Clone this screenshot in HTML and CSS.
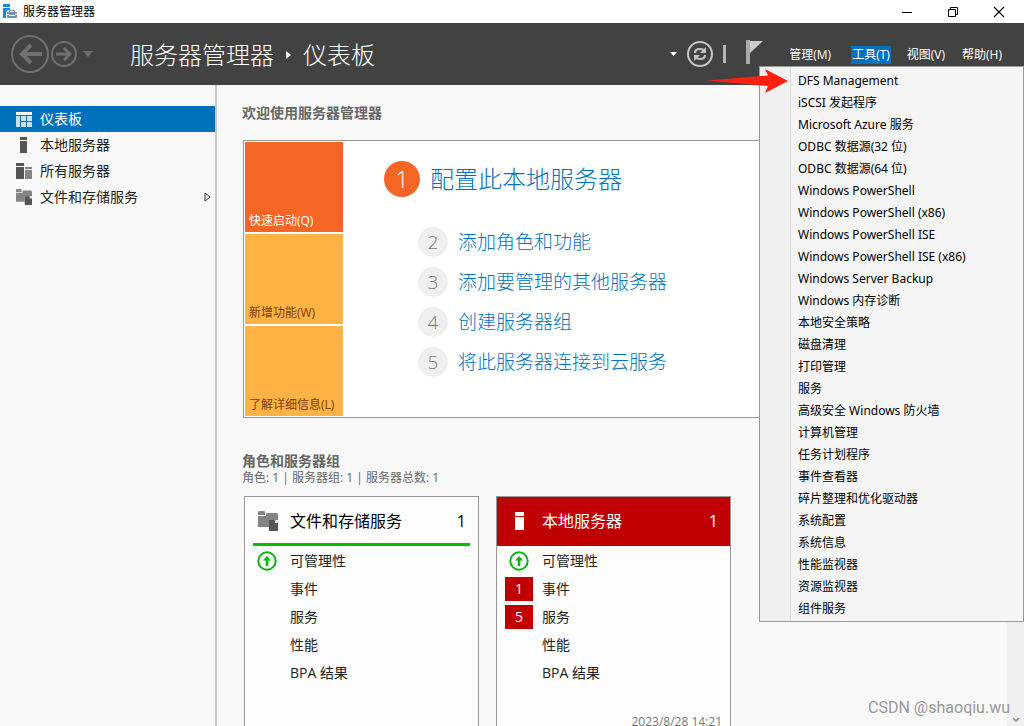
FILE: index.html
```html
<!DOCTYPE html>
<html lang="zh-CN">
<head>
<meta charset="utf-8">
<title>服务器管理器</title>
<link rel="stylesheet" href="styles.css">
</head>
<body>
<svg class="defs" aria-hidden="true">
  <symbol id="files" viewBox="0 0 20 20">
    <path fill="#848484" d="M0 1q0-1 1-1h5q1 0 1 1v3H0zM0 5h8V4q0-2 1-2h10q1 0 1 2v5h-9v7H0z"/>
    <path fill="#555" d="M11 9h6l3 3v8h-9z"/><path fill="#eee" d="M17 9v3h3z"/>
  </symbol>
  <symbol id="ok" viewBox="0 0 20 20">
    <circle cx="10" cy="10" r="8.700" fill="none" stroke="#08b50b" stroke-width="2"/>
    <path fill="#08b50b" d="M10 5l4 4.500H11.300V15H8.700V9.500H6z"/>
  </symbol>
</svg>
<header class="titlebar">
  <svg width="15" height="15" viewBox="0 0 15 15"><path fill="#1c87d8" d="M0 0h7v3H0zM0 4h7v2H5L3 8v6H0z"/><path fill="#6d93ad" d="M6 7q0-1 1-1h4q1 0 1 1v1h2v3H4V8h2zM4 11h10v3H4z"/><path fill="#fff" d="M7 7h4v1H7zM4 10h2v1h6v-1h2v1h-2v1H6v-1H4z"/></svg>
  <span class="app-name">服务器管理器</span>
  <div class="window-buttons">
    <button aria-label="最小化"><svg width="12" height="12"><path d="M1 6.500h10" stroke="#000"/></svg></button>
    <button aria-label="还原"><svg width="12" height="12" fill="none" stroke="#000"><path d="M1.500 3.500h7v7h-7zM3.500 3V1.500h7v7H9"/></svg></button>
    <button aria-label="关闭"><svg width="12" height="12"><path d="M1 1l10 10M11 1L1 11" stroke="#000" stroke-width="1.100"/></svg></button>
  </div>
</header>
<div class="banner">
  <div class="history">
    <button aria-label="后退"><svg width="38" height="38" fill="none" stroke="#707070"><circle cx="19" cy="19" r="18" stroke-width="2"/><path d="M31 19H10M20 10l-9 9 9 9" stroke-width="4"/></svg></button>
    <button aria-label="前进"><svg width="26" height="26" fill="none" stroke="#707070"><circle cx="13" cy="13" r="12" stroke-width="2"/><path d="M5 13h14M13 7l6 6-6 6" stroke-width="3"/></svg></button>
    <button aria-label="历史记录" class="history-more"><svg width="10" height="6"><path fill="#707070" d="M0 0h10L5 6z"/></svg></button>
  </div>
  <h1 class="crumbs"><span>服务器管理器</span><svg width="5" height="8"><path fill="#fff" d="M0 0l5 4-5 4z"/></svg><span>仪表板</span></h1>
  <div class="status">
    <svg width="7" height="4"><path fill="#fff" d="M0 0h7L3.500 4z"/></svg>
    <button aria-label="刷新"><svg width="26" height="26" fill="none" stroke="#c4c4c4"><circle cx="13" cy="13" r="12" stroke-width="2"/><path d="M8 12q0-4 5-4 3 0 5 2M18 14q0 4-5 4-3 0-5-2" stroke-width="2.200"/><path fill="#c4c4c4" stroke="none" d="M19 6v6h-6zM7 20v-6h6z"/></svg></button>
    <span class="divider"></span>
    <button aria-label="通知" class="flag"><svg width="17" height="24"><path fill="#aaa" d="M0 0h4v24H0z"/><path fill="#ccc" d="M4 1h13L4 13z"/></svg></button>
  </div>
  <nav class="menubar">
    <button>管理(M)</button><button class="open" aria-expanded="true">工具(T)</button><button>视图(V)</button><button>帮助(H)</button>
  </nav>
  <ul class="tools-menu" role="menu">
    <li role="menuitem">DFS Management</li>
    <li role="menuitem">iSCSI 发起程序</li>
    <li role="menuitem">Microsoft Azure 服务</li>
    <li role="menuitem">ODBC 数据源(32 位)</li>
    <li role="menuitem">ODBC 数据源(64 位)</li>
    <li role="menuitem">Windows PowerShell</li>
    <li role="menuitem">Windows PowerShell (x86)</li>
    <li role="menuitem">Windows PowerShell ISE</li>
    <li role="menuitem">Windows PowerShell ISE (x86)</li>
    <li role="menuitem">Windows Server Backup</li>
    <li role="menuitem">Windows 内存诊断</li>
    <li role="menuitem">本地安全策略</li>
    <li role="menuitem">磁盘清理</li>
    <li role="menuitem">打印管理</li>
    <li role="menuitem">服务</li>
    <li role="menuitem">高级安全 Windows 防火墙</li>
    <li role="menuitem">计算机管理</li>
    <li role="menuitem">任务计划程序</li>
    <li role="menuitem">事件查看器</li>
    <li role="menuitem">碎片整理和优化驱动器</li>
    <li role="menuitem">系统配置</li>
    <li role="menuitem">系统信息</li>
    <li role="menuitem">性能监视器</li>
    <li role="menuitem">资源监视器</li>
    <li role="menuitem">组件服务</li>
  </ul>
  <svg class="pointer" width="80" height="24" viewBox="0 0 80 24"><path fill="#ff2010" d="M0 11.500L60 6.500 57 0 80 12 57 24 60 17z"/></svg>
</div>
<div class="workspace">
  <nav class="sidebar">
    <a href="#" class="nav-item current"><svg width="16" height="15"><path fill="#fff" d="M0 0h16v3H0z"/><path fill="#c7e0f2" d="M0 4h4v11H0zM5 4h5v5H5zM11 4h5v5h-5zM5 10h5v5H5zM11 10h5v5h-5z"/></svg><span>仪表板</span></a>
    <a href="#" class="nav-item"><svg width="16" height="16"><path fill="#555" d="M4 0h7v3H4zM4 4h7v12H4z"/></svg><span>本地服务器</span></a>
    <a href="#" class="nav-item"><svg width="16" height="16"><path fill="#555" d="M0 0h8v3H0zM0 4h8v12H0z"/><path fill="#848484" d="M9 4h7v2H9zM9 7h7v9H9z"/></svg><span>所有服务器</span></a>
    <a href="#" class="nav-item"><svg width="16" height="16"><use href="#files"/></svg><span>文件和存储服务</span><svg class="expand" width="7" height="10"><path d="M1 1l5 4-5 4z" fill="none" stroke="#333"/></svg></a>
  </nav>
  <main class="content">
    <h2>欢迎使用服务器管理器</h2>
    <section class="welcome">
      <div class="tiles">
        <button class="tile active">快速启动(Q)</button>
        <button class="tile">新增功能(W)</button>
        <button class="tile">了解详细信息(L)</button>
      </div>
      <div class="steps">
        <div class="step first"><span class="num">1</span><a href="#">配置此本地服务器</a></div>
        <div class="step"><span class="num">2</span><a href="#">添加角色和功能</a></div>
        <div class="step"><span class="num">3</span><a href="#">添加要管理的其他服务器</a></div>
        <div class="step"><span class="num">4</span><a href="#">创建服务器组</a></div>
        <div class="step"><span class="num">5</span><a href="#">将此服务器连接到云服务</a></div>
      </div>
    </section>
    <h2>角色和服务器组</h2>
    <p class="summary">角色: 1 | 服务器组: 1 | 服务器总数: 1</p>
    <div class="cards">
      <section class="card">
        <h3 class="card-head"><svg width="20" height="20"><use href="#files"/></svg><span>文件和存储服务</span><span class="count">1</span></h3>
        <ul>
          <li><span class="state"><svg width="20" height="20"><use href="#ok"/></svg></span>可管理性</li>
          <li><span class="state"></span>事件</li>
          <li><span class="state"></span>服务</li>
          <li><span class="state"></span>性能</li>
          <li><span class="state"></span>BPA 结果</li>
        </ul>
      </section>
      <section class="card alert">
        <h3 class="card-head"><svg width="20" height="20"><path fill="#fff" d="M5 1h9v4H5zM5 6h9v13H5z"/></svg><span>本地服务器</span><span class="count">1</span></h3>
        <ul>
          <li><span class="state"><svg width="20" height="20"><use href="#ok"/></svg></span>可管理性</li>
          <li><span class="state bad">1</span>事件</li>
          <li><span class="state bad">5</span>服务</li>
          <li><span class="state"></span>性能</li>
          <li><span class="state"></span>BPA 结果</li>
        </ul>
        <time>2023/8/28 14:21</time>
      </section>
    </div>
  </main>
  <div class="scrollbar"><svg width="8" height="5"><path d="M1 1l3 3 3-3" fill="none" stroke="#888" stroke-width="1.500"/></svg></div>
</div>
<span class="watermark">CSDN @shaoqiu.wu</span>
</body>
</html>
```
FILE: styles.css
```css
* { box-sizing: border-box; }
body {
  margin: 0;
  height: 100vh;
  display: flex;
  flex-direction: column;
  overflow: hidden;
  position: relative;
  background: #f8f8f8;
  color: #222;
  font: 14px/20px "Open Sans", "Noto Sans CJK SC", sans-serif;
}
button { border: 0; padding: 0; background: none; color: inherit; font: inherit; }
a { color: inherit; text-decoration: none; }
ul { list-style: none; margin: 0; padding: 0; }
h1, h2, h3, p { margin: 0; }
svg { flex: none; display: block; }
.defs { position: absolute; width: 0; height: 0; }

.titlebar {
  flex: none;
  height: 23px;
  display: flex;
  align-items: center;
  gap: 5px;
  padding-left: 3px;
  background: #fff;
  color: #000;
  font-size: 12px;
}
.window-buttons { margin-left: auto; display: flex; padding-right: 2px; }
.window-buttons button { width: 46px; height: 20px; display: grid; place-items: center; }

.banner {
  flex: none;
  height: 62px;
  position: relative;
  z-index: 1;
  display: flex;
  align-items: center;
  padding: 0 21px 0 11px;
  background: #424242;
  color: #fff;
}
.history { display: flex; align-items: center; gap: 2px; }
.history-more { padding-left: 4px; }
.crumbs { display: flex; align-items: center; gap: 12px; margin-left: 37px; padding-top: 2px; font-size: 24px; line-height: 32px; font-weight: 300; }
.status { display: flex; align-items: center; gap: 10px; margin-left: auto; }
.divider { width: 3px; height: 18px; background: #b5b5b5; }
.flag { padding: 0 0 4px 10px; }
.menubar { display: flex; gap: 15px; margin-left: 25px; padding-top: 2px; font-size: 12px; line-height: 18px; }
.menubar button { padding: 0 1px; }
.menubar .open { margin-left: 4px; background: #0072bc; }
.tools-menu {
  position: absolute;
  top: 43px;
  right: 0;
  width: 265px;
  padding: 3px 2px 1px;
  border: 1px solid #999;
  background: linear-gradient(90deg, #f0f0f0 30px, #dedede 30px, #dedede 31px, #f5f5f5 31px);
  color: #000;
  font-family: "Noto Sans", "Noto Sans CJK SC", sans-serif;
  font-size: 12px;
  line-height: 22px;
}
.tools-menu li { padding-left: 36px; }
.pointer { position: absolute; top: 46px; right: 236px; }

.workspace { flex: 1; min-height: 0; display: flex; }
.sidebar { flex: none; width: 217px; padding-top: 21px; border-right: 2px solid #c8c8c8; }
.nav-item { height: 26px; display: flex; align-items: center; gap: 8px; padding: 0 4px 0 16px; }
.nav-item.current { background: #0072bc; color: #fff; }
.expand { margin-left: auto; }

.content { flex: 1; min-width: 0; padding: 18px 25px 0; overflow: hidden; }
h2 { font-size: 14px; line-height: 20px; color: #666; }
.welcome {
  display: flex;
  margin: 17px 0 33px 1px;
  padding: 1px;
  border: 1px solid #999;
  background: #fff;
}
.tiles { display: grid; gap: 2px; width: 98px; }
.tile {
  height: 90px;
  display: flex;
  align-items: flex-end;
  padding: 0 4px 2px;
  background: #ffb343;
  color: #803a0c;
  font-size: 12px;
  line-height: 18px;
  white-space: nowrap;
}
.tile.active { background: #f56624; color: #fff; }
.steps { padding: 19px 0 0 41px; color: #0072bc; }
.step { display: flex; align-items: center; gap: 10px; margin: 0 0 10px 34px; font-size: 19px; line-height: 30px; font-weight: 300; }
.step.first { margin: 0 0 30px; font-size: 24px; line-height: 36px; }
.num { width: 30px; height: 30px; border-radius: 50%; background: #efefef; color: #777; text-align: center; }
.first .num { width: 36px; height: 36px; background: #f56624; color: #fff; }
.summary { font-size: 12px; line-height: 14px; color: #666; }

.cards { display: flex; gap: 17px; margin: 11px 0 0 2px; }
.card { width: 235px; min-height: 250px; border: 1px solid #999; background: #fdfdfd; display: flex; flex-direction: column; }
.card-head {
  height: 49px;
  display: flex;
  align-items: center;
  gap: 12px;
  margin: 0 8px;
  padding: 2px 4px 0 5px;
  border-bottom: 3px solid #00c000;
  color: #000;
  font-size: 16px;
  font-weight: 400;
}
.count { margin-left: auto; }
.alert .card-head { margin: 0; padding: 0 12px 1px 13px; border: 0; background: #c00000; color: #fff; }
.card li { height: 28px; display: flex; align-items: center; gap: 9px; padding-left: 8px; }
.card ul { padding-top: 1px; }
.state { width: 28px; height: 24px; display: grid; place-items: center; }
.state.bad { background: #c00000; color: #fff; }
.card time { margin: 25px 8px 0 auto; font-size: 12px; color: #777; }
.scrollbar { flex: none; width: 17px; display: flex; align-items: flex-end; justify-content: center; padding-bottom: 4px; background: #f0f0f0; }
.watermark { position: absolute; right: 14px; bottom: 8px; font: 16px/20px Roboto, sans-serif; color: #999; z-index: 2; }
```
